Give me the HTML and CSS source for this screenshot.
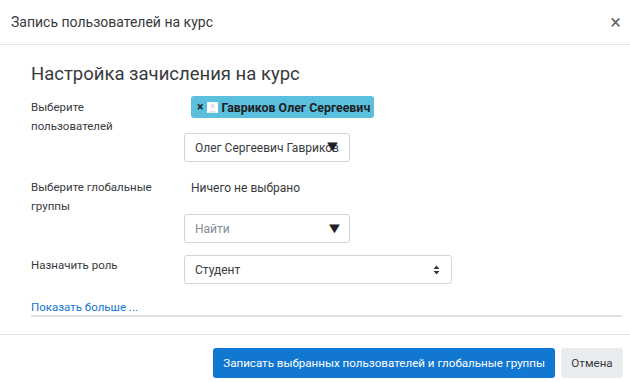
FILE: index.html
```html
<!DOCTYPE html>
<html lang="ru">

<head>
    <meta charset="UTF-8">
    <meta name="viewport" content="width=device-width, initial-scale=1.0">
    <title>Запись пользователей на курс</title>
    <link rel="stylesheet" href="styles.css">
</head>

<body>
    <div class="modal">
        <div class="modal-header">
            <h5 class="modal-title">Запись пользователей на курс</h5>
            <span class="close">&times;</span>
        </div>

        <div class="modal-body">
            <h3 class="section-title">Настройка зачисления на курс</h3>

            <div class="form-row row-users">
                <label class="form-label">Выберите<br>пользователей</label>
                <div class="form-control-wrap">
                    <div class="selection">
                        <span class="tag">
                            <span class="tag-x">&times;</span>
                            <svg class="tag-pic" width="11" height="11" viewBox="0 0 11 11">
                                <rect width="11" height="11" fill="#fff"/>
                                <circle cx="5.5" cy="4" r="2.2" fill="#e4e4e4"/>
                                <path d="M1.5 11 C1.5 7.5 9.5 7.5 9.5 11 Z" fill="#e4e4e4"/>
                            </svg>
                            Гавриков Олег Сергеевич
                        </span>
                    </div>
                    <div class="fake-select small">
                        <span class="fake-text">Олег Сергеевич Гавриков</span>
                        <span class="arrow">&#9660;</span>
                    </div>
                </div>
            </div>

            <div class="form-row row-groups">
                <label class="form-label">Выберите глобальные<br>группы</label>
                <div class="form-control-wrap">
                    <div class="nothing">Ничего не выбрано</div>
                    <div class="fake-select small search">
                        <span class="fake-text placeholder">Найти</span>
                        <span class="arrow">&#9660;</span>
                    </div>
                </div>
            </div>

            <div class="form-row row-role">
                <label class="form-label">Назначить роль</label>
                <div class="form-control-wrap">
                    <div class="fake-select role">
                        <span class="fake-text">Студент</span>
                        <svg class="updown" width="7" height="10" viewBox="0 0 7 10">
                            <path d="M0.5 4 L3.5 0.5 L6.5 4 Z M0.5 6 L3.5 9.5 L6.5 6 Z" fill="#373a3c"/>
                        </svg>
                    </div>
                </div>
            </div>

            <div class="more">
                <a href="#" class="more-link">Показать больше ...</a>
            </div>
        </div>

        <div class="modal-footer">
            <button class="btn btn-primary">Записать выбранных пользователей и глобальные группы</button>
            <button class="btn btn-secondary">Отмена</button>
        </div>
    </div>
</body>
</html>
```

FILE: styles.css
```css
body {
    font-family: Roboto, "Noto Sans", Arial, sans-serif;
    background-color: #fff;
    color: #373a3c;
    margin: 0;
    padding: 0;
}

.modal {
    width: 630px;
    height: 382px;
    overflow: hidden;
}

.modal-header {
    display: flex;
    align-items: center;
    justify-content: space-between;
    height: 44px;
    padding: 0 9px 0 11px;
    border-bottom: 1px solid #e5e5e5;
}

.modal-title {
    margin: 0;
    font-size: 14px;
    font-weight: normal;
    color: #373a3c;
}

.close {
    font-size: 20px;
    color: #6a6a6a;
    line-height: 1;
}

.modal-body {
    padding: 16px 8px 0 31px;
}

.section-title {
    margin: 0 0 8px 0;
    font-size: 18.5px;
    font-weight: normal;
    color: #373a3c;
    line-height: 26px;
}

.form-row {
    display: grid;
    grid-template-columns: 153px 1fr;
}

.form-label {
    font-size: 11.5px;
    line-height: 19px;
    padding-top: 3px;
}

.form-control-wrap {
    display: flex;
    flex-direction: column;
    align-items: flex-start;
}

.selection {
    padding: 1px 0 0 7px;
    height: 26px;
}

.tag {
    display: inline-flex;
    align-items: center;
    height: 22px;
    padding: 0 4px 0 6px;
    background-color: #5bc0de;
    border-radius: 3px;
    color: #1d2125;
    font-weight: bold;
    font-size: 12.4px;
}

.tag-x {
    font-size: 12px;
    margin-right: 4px;
}

.tag-pic {
    margin-right: 3px;
}

.fake-select {
    position: relative;
    display: flex;
    align-items: center;
    height: 27px;
    border: 1px solid #ced4da;
    border-radius: 3px;
    font-size: 12px;
    overflow: hidden;
    white-space: nowrap;
}

.fake-select.small {
    width: 164px;
    margin-top: 11px;
}

.fake-text {
    padding-left: 10px;
}

.placeholder {
    color: #868e96;
}

.arrow {
    position: absolute;
    right: 9px;
    top: 5px;
    font-size: 15px;
    line-height: 1;
    color: #1d2125;
    transform: scaleX(1.2);
}

.search .arrow {
    right: 7px;
    top: 6px;
}

.row-users {
    height: 68px;
}

.row-groups {
    margin-top: 12px;
}

.nothing {
    font-size: 12px;
    padding: 6px 0 0 7px;
    height: 18px;
}

.row-groups .fake-select {
    margin-top: 15px;
}

.row-role {
    margin-top: 12px;
}

.row-role .form-label {
    padding-top: 1px;
}

.fake-select.role {
    width: 266px;
    justify-content: space-between;
}

.updown {
    margin-right: 11px;
}

.more {
    margin-top: 14px;
    border-bottom: 2px solid #dee2e6;
    line-height: 16px;
}

.more-link {
    font-size: 11.5px;
    color: #1177d1;
    text-decoration: none;
}

.modal-footer {
    position: absolute;
    top: 334px;
    left: 0;
    width: 630px;
    display: flex;
    justify-content: flex-end;
    gap: 6px;
    padding: 13px 7px 0 0;
    box-sizing: border-box;
    border-top: 1px solid #e5e5e5;
}

.btn {
    height: 30px;
    border: none;
    border-radius: 3px;
    font-family: inherit;
    font-size: 11.6px;
    padding: 0 10px;
    cursor: pointer;
}

.btn-primary {
    background-color: #1177d1;
    color: #fff;
}

.btn-secondary {
    background-color: #e9ecef;
    color: #373a3c;
    width: 62px;
}
```
